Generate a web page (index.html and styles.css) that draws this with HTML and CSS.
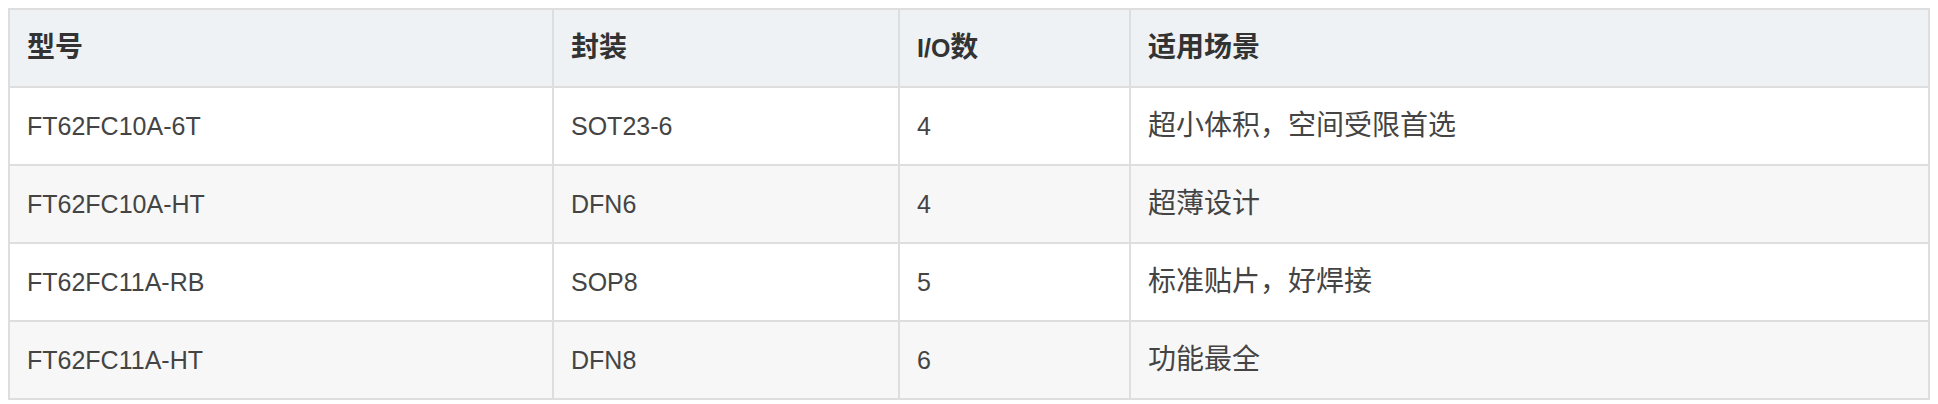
FILE: index.html
```html
<!DOCTYPE html>
<html lang="zh-CN">
<head>
<meta charset="utf-8">
<title>型号对比</title>
<link rel="stylesheet" href="styles.css">
</head>
<body>
<table class="spec-table">
  <colgroup>
    <col class="col-model">
    <col class="col-pkg">
    <col class="col-io">
    <col class="col-use">
  </colgroup>
  <thead>
    <tr>
      <th><span class="zh">型号</span></th>
      <th><span class="zh">封装</span></th>
      <th>I/O<span class="zh">数</span></th>
      <th><span class="zh">适用场景</span></th>
    </tr>
  </thead>
  <tbody>
    <tr>
      <td>FT62FC10A-6T</td>
      <td>SOT23-6</td>
      <td>4</td>
      <td><span class="zh">超小体积，空间受限首选</span></td>
    </tr>
    <tr>
      <td>FT62FC10A-HT</td>
      <td>DFN6</td>
      <td>4</td>
      <td><span class="zh">超薄设计</span></td>
    </tr>
    <tr>
      <td>FT62FC11A-RB</td>
      <td>SOP8</td>
      <td>5</td>
      <td><span class="zh">标准贴片，好焊接</span></td>
    </tr>
    <tr>
      <td>FT62FC11A-HT</td>
      <td>DFN8</td>
      <td>6</td>
      <td><span class="zh">功能最全</span></td>
    </tr>
  </tbody>
</table>
</body>
</html>
```
FILE: styles.css
```css
html, body {
  background: #ffffff;
}
body {
  margin: 8px;
  font-family: "Liberation Sans", Arial, "Noto Sans CJK SC", sans-serif;
  font-size: 25px;
  color: #444444;
}
.spec-table {
  width: 100%;
  border-collapse: collapse;
  table-layout: fixed;
}
.col-model { width: 544px; }
.col-pkg { width: 346px; }
.col-io { width: 231px; }
.spec-table th,
.spec-table td {
  border: 2px solid #dedede;
  padding: 18px 17px;
  height: 40px;
  line-height: 40px;
  text-align: left;
  vertical-align: middle;
  white-space: nowrap;
}
.spec-table th {
  background: #eef2f5;
  color: #333333;
  font-weight: bold;
}
.spec-table tbody tr:nth-child(even) td {
  background: #f7f7f7;
}
.zh {
  font-family: "Noto Sans CJK SC", "Liberation Sans", sans-serif;
  font-size: 28px;
  line-height: 28px;
}
```
